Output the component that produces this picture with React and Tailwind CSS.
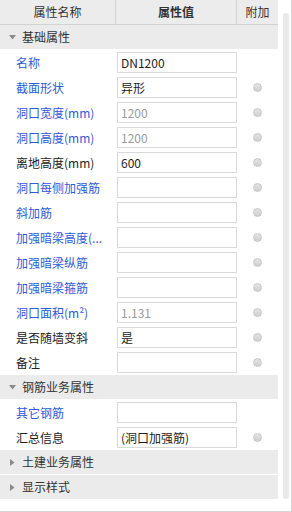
import React from 'react';

const basic = [
  { label: '名称', value: 'DN1200', blue: true, dot: false },
  { label: '截面形状', value: '异形', blue: true, dot: true },
  { label: '洞口宽度(mm)', value: '1200', blue: true, dot: true, muted: true },
  { label: '洞口高度(mm)', value: '1200', blue: true, dot: true, muted: true },
  { label: '离地高度(mm)', value: '600', blue: false, dot: true },
  { label: '洞口每侧加强筋', value: '', blue: true, dot: true },
  { label: '斜加筋', value: '', blue: true, dot: true },
  { label: '加强暗梁高度(...', value: '', blue: true, dot: true },
  { label: '加强暗梁纵筋', value: '', blue: true, dot: true },
  { label: '加强暗梁箍筋', value: '', blue: true, dot: true },
  { label: '洞口面积(m²)', value: '1.131', blue: true, dot: true, muted: true },
  { label: '是否随墙变斜', value: '是', blue: false, dot: true },
  { label: '备注', value: '', blue: false, dot: true },
];

const rebar = [
  { label: '其它钢筋', value: '', blue: true, dot: false },
  { label: '汇总信息', value: '(洞口加强筋)', blue: false, dot: true },
];

const Section = ({ title, open }) => (
  <div className="h-[25px] flex items-center bg-[#ebebeb] border-b border-white">
    <span className="w-[22px] flex justify-center pl-[2px]">
      {open ? (
        <svg width="7" height="5" viewBox="0 0 7 5"><path d="M0 0H7L3.5 4.5Z" fill="#8c8c8c" /></svg>
      ) : (
        <svg width="5" height="7" viewBox="0 0 5 7"><path d="M0 0V7L4.5 3.5Z" fill="#8c8c8c" /></svg>
      )}
    </span>
    <span className="text-[#333]">{title}</span>
  </div>
);

const Row = ({ row }) => (
  <div className="h-[25px] flex">
    <div className={`w-[116px] pl-[16px] flex items-center whitespace-nowrap overflow-hidden ${row.blue ? 'text-[#2f5ad8]' : 'text-[#222]'}`}>
      {row.label}
    </div>
    <div className="w-[121px] pt-[2px] pl-[1px]">
      <div className={`h-[21px] w-[120px] border border-[#d9d9d9] bg-white pl-[3px] flex items-center ${row.muted ? 'text-[#9a9a9a]' : 'text-[#222]'}`}>
        {row.value}
      </div>
    </div>
    <div className="w-[41px] flex items-center justify-center">
      {row.dot && (
        <span className="block w-[9px] h-[9px] rounded-full border border-[#c6c6c6] bg-gradient-to-b from-[#e4e4e4] to-[#cfcfcf]" />
      )}
    </div>
  </div>
);

export default function App() {
  return (
    <div
      className="w-[292px] h-[512px] bg-white border-r border-b border-[#d6d6d6] flex text-[12px] leading-none"
      style={{ fontFamily: '"Noto Sans CJK SC", "Noto Sans", sans-serif' }}
    >
      <div className="w-[278px] flex flex-col">
        <div className="h-[25px] flex bg-[#ececec] border-b border-[#d2d2d2] text-[#333]">
          <div className="w-[116px] border-r border-[#d2d2d2] flex items-center justify-center">属性名称</div>
          <div className="w-[121px] border-r border-[#d2d2d2] flex items-center justify-center font-bold">属性值</div>
          <div className="w-[41px] flex items-center justify-center">附加</div>
        </div>
        <Section title="基础属性" open />
        {basic.map((r) => <Row key={r.label} row={r} />)}
        <Section title="钢筋业务属性" open />
        {rebar.map((r) => <Row key={r.label} row={r} />)}
        <Section title="土建业务属性" />
        <Section title="显示样式" />
      </div>
      <div className="flex-1 pt-[13px] pl-[5px]">
        <div className="w-[6px] h-[486px] rounded-[3px] bg-[#e9e9e9]" />
      </div>
    </div>
  );
}
